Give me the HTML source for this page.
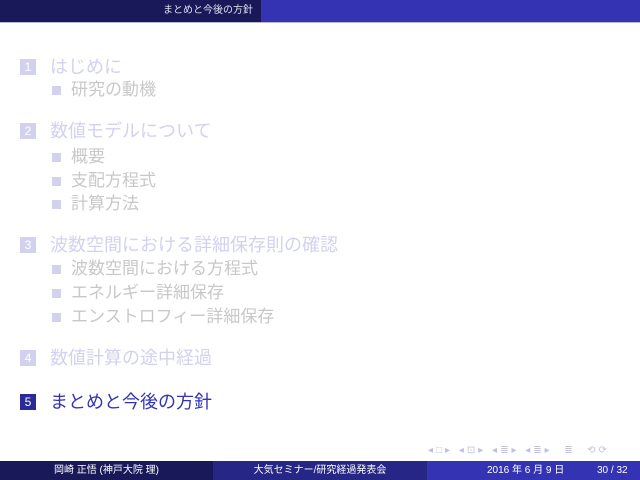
<!DOCTYPE html>
<html><head><meta charset="utf-8"><style>
*{margin:0;padding:0}
body{width:640px;height:480px;position:relative;background:#fff;overflow:hidden;font-family:"Liberation Sans","Noto Sans CJK JP",sans-serif}
.hdr{position:absolute;top:0;left:0;width:640px;height:22px}
.hl{position:absolute;left:0;top:0;width:261px;height:22px;background:#191959;color:#e0e0ee;font-size:10px;text-align:right;line-height:22px}
.hl span{padding-right:8px}
.hr{position:absolute;left:261px;top:0;width:379px;height:22px;background:#3333b3}
.shadow{position:absolute;top:22px;left:0;width:640px;height:1px;background:#b8b8d0}
.sec{position:absolute;left:20px;font-size:18px;color:#d2d2ee;line-height:20px;white-space:nowrap}
.num{position:absolute;left:0;top:2px;width:16px;height:16px;background:#d2d2ee;color:#fff;font-size:12px;line-height:16px;text-align:center}
.sec .t{position:absolute;left:30px;top:0}
.sub{position:absolute;left:52px;font-size:17px;color:#c8c8c8;line-height:20px;white-space:nowrap}
.sub .b{position:absolute;left:0;top:6px;width:9px;height:9px;background:#d2d2ee}
.sub .t{position:absolute;left:19px;top:0}
.act{color:#3333b3}
.act .num{background:#2a2a99}
.ftr{position:absolute;left:0;top:461px;width:640px;height:19px;font-size:10px;line-height:19px;color:#fff}
.f1{position:absolute;left:0;width:213px;height:19px;background:#191959;text-align:center}
.f2{position:absolute;left:213px;width:214px;height:19px;background:#262686;text-align:center}
.f3{position:absolute;left:427px;width:213px;height:19px;background:#3333b3}
.nav{position:absolute;top:445px;left:428px;font-size:10px;color:#c0c0dc;letter-spacing:3px;white-space:nowrap}
</style></head><body>
<div class="hdr"><div class="hl"><span>まとめと今後の方針</span></div><div class="hr"></div></div>
<div class="shadow"></div>

<div class="sec" style="top:57px"><div class="num">1</div><div class="t">はじめに</div></div>
<div class="sub" style="top:80px"><div class="b"></div><div class="t">研究の動機</div></div>

<div class="sec" style="top:121px"><div class="num">2</div><div class="t">数値モデルについて</div></div>
<div class="sub" style="top:147px"><div class="b"></div><div class="t">概要</div></div>
<div class="sub" style="top:171px"><div class="b"></div><div class="t">支配方程式</div></div>
<div class="sub" style="top:194px"><div class="b"></div><div class="t">計算方法</div></div>

<div class="sec" style="top:235px"><div class="num">3</div><div class="t">波数空間における詳細保存則の確認</div></div>
<div class="sub" style="top:259px"><div class="b"></div><div class="t">波数空間における方程式</div></div>
<div class="sub" style="top:283px"><div class="b"></div><div class="t">エネルギー詳細保存</div></div>
<div class="sub" style="top:307px"><div class="b"></div><div class="t">エンストロフィー詳細保存</div></div>

<div class="sec" style="top:348px"><div class="num">4</div><div class="t">数値計算の途中経過</div></div>

<div class="sec act" style="top:392px"><div class="num">5</div><div class="t">まとめと今後の方針</div></div>

<div class="nav">◂□▸ ◂⊡▸ ◂≣▸ ◂≣▸ &nbsp;≣ &nbsp;⟲⟳</div>

<div class="ftr">
<div class="f1">岡崎 正悟 (神戸大院 理)</div>
<div class="f2">大気セミナー/研究経過発表会</div>
<div class="f3"><span style="position:absolute;left:60px">2016 年 6 月 9 日</span><span style="position:absolute;left:170px">30 / 32</span></div>
</div>
</body></html>
